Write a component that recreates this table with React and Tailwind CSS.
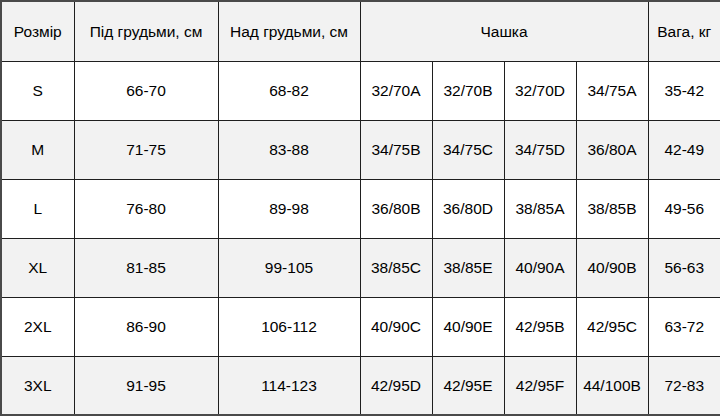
const ROWS = [
  { size: 'S', under: '66-70', over: '68-82', cups: ['32/70A', '32/70B', '32/70D', '34/75A'], weight: '35-42' },
  { size: 'M', under: '71-75', over: '83-88', cups: ['34/75B', '34/75C', '34/75D', '36/80A'], weight: '42-49' },
  { size: 'L', under: '76-80', over: '89-98', cups: ['36/80B', '36/80D', '38/85A', '38/85B'], weight: '49-56' },
  { size: 'XL', under: '81-85', over: '99-105', cups: ['38/85C', '38/85E', '40/90A', '40/90B'], weight: '56-63' },
  { size: '2XL', under: '86-90', over: '106-112', cups: ['40/90C', '40/90E', '42/95B', '42/95C'], weight: '63-72' },
  { size: '3XL', under: '91-95', over: '114-123', cups: ['42/95D', '42/95E', '42/95F', '44/100B'], weight: '72-83' },
];

const cell = 'border border-[#1f1f1f] text-center align-middle p-0';

export default function App() {
  return (
    <div className="w-[720px] h-[416px] bg-white" style={{ fontFamily: '"Liberation Sans", Arial, sans-serif' }}>
      <table className="w-[720px] h-[416px] table-fixed border-collapse border-2 border-[#4a4a4a] text-[15.5px] text-black">
        <colgroup>
          <col className="w-[73px]" />
          <col className="w-[144px]" />
          <col className="w-[142px]" />
          <col className="w-[72px]" />
          <col className="w-[72px]" />
          <col className="w-[72px]" />
          <col className="w-[72px]" />
          <col className="w-[73px]" />
        </colgroup>
        <thead>
          <tr className="h-[60px] bg-[#f2f2f2]">
            <th className={`${cell} font-normal`}>Розмір</th>
            <th className={`${cell} font-normal`}>Під грудьми, см</th>
            <th className={`${cell} font-normal`}>Над грудьми, см</th>
            <th colSpan={4} className={`${cell} font-normal`}>Чашка</th>
            <th className={`${cell} font-normal`}>Вага, кг</th>
          </tr>
        </thead>
        <tbody>
          {ROWS.map((r, i) => (
            <tr key={r.size} className={`h-[59px] ${i % 2 === 1 ? 'bg-[#f2f2f2]' : 'bg-white'}`}>
              <td className={cell}>{r.size}</td>
              <td className={cell}>{r.under}</td>
              <td className={cell}>{r.over}</td>
              {r.cups.map(c => (
                <td key={c} className={cell}>{c}</td>
              ))}
              <td className={cell}>{r.weight}</td>
            </tr>
          ))}
        </tbody>
      </table>
    </div>
  );
}
